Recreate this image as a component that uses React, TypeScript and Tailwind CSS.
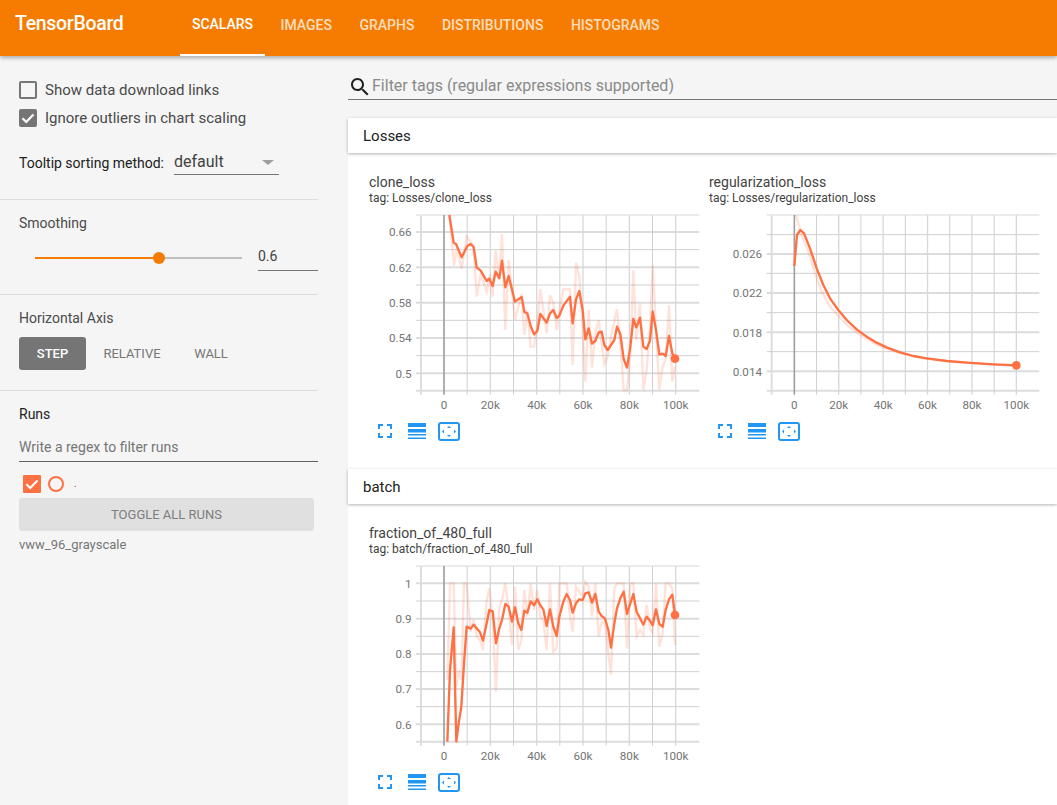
const lossLine =
  '268,135 281,218 288,222 305,262 322,228 332,222 341,232 350,292 362,302 380,333 388,326 398,348 407,305 418,325 426,272 436,352 446,318 465,395 485,381 493,426 502,430 512,468 522,493 532,483 541,432 560,458 570,430 580,420 590,444 598,437 610,407 630,380 638,460 648,388 658,363 668,420 676,508 686,475 696,521 706,513 716,487 725,485 733,525 743,540 763,510 771,470 781,492 791,567 801,593 811,530 820,447 829,472 840,443 850,530 860,537 870,512 878,424 888,480 898,553 908,551 917,558 927,498 937,550 945,566';
const lossRaw =
  '268,135 278,240 282,287 290,235 305,297 320,200 340,225 350,380 362,310 380,365 390,315 398,380 407,242 418,320 426,192 436,480 446,270 465,450 485,372 493,495 502,420 512,530 522,530 532,460 541,357 560,490 570,375 580,400 590,480 598,420 610,358 630,357 638,585 648,278 658,320 668,480 676,635 686,420 696,592 706,490 716,450 733,582 743,560 755,490 771,418 781,520 791,660 801,660 811,560 820,300 829,510 840,400 850,660 860,600 870,470 878,285 888,480 898,660 908,590 917,570 927,405 937,635 945,590';
const regLine =
  '283,288 291,195 301,180 312,190 330,235 350,295 370,345 390,385 415,420 440,450 470,478 500,500 530,518 560,532 600,547 640,558 680,565 740,573 800,578 880,583 949,586';
const regRaw =
  '288,135 295,160 305,195 325,245 345,310 365,365 390,410 415,437 440,465 470,487 500,507 530,523 560,537 600,549 640,559 680,566 740,573 800,578 880,583 949,586';
const fracLine =
  '262,665 270,450 281,322 289,665 296,610 304,560 312,430 320,320 332,326 341,314 350,325 360,337 369,362 380,310 388,270 398,274 408,370 418,325 426,300 436,252 446,260 456,305 465,262 475,310 484,330 493,272 502,278 512,244 522,256 532,238 541,256 550,268 560,318 570,268 580,320 590,348 598,290 610,245 620,222 630,240 638,278 648,250 658,238 668,240 676,220 686,217 696,248 706,222 716,275 725,288 735,296 745,330 753,383 763,310 771,265 781,235 791,215 801,282 811,250 820,222 830,275 840,295 850,314 860,290 870,302 878,316 888,268 898,312 908,320 917,270 927,238 937,224 945,285';
const fracRaw =
  '262,480 270,190 281,190 289,500 296,450 304,480 312,190 320,190 332,335 341,300 350,350 360,360 369,390 380,240 388,205 398,300 408,515 418,260 426,240 436,190 446,270 456,375 465,200 475,390 484,360 493,210 502,290 512,190 522,270 532,210 541,290 550,300 560,390 570,190 580,395 590,385 598,190 620,190 630,290 638,335 648,200 658,215 668,230 676,185 686,200 696,290 706,190 716,350 725,305 735,310 745,400 753,465 763,205 771,190 791,190 801,385 811,190 820,190 830,350 840,330 850,345 860,255 870,325 878,340 888,190 898,380 908,340 917,190 927,190 937,205 945,375';

type ChartProps = {
  title: string;
  tag: string;
  top: number;
  bottom: number;
  left: number;
  x0: number;
  x100: number;
  labelX: number;
  major: [number, string][];
  minor: number[];
  line: string;
  raw: string;
};

const Chart = ({ title, tag, top, bottom, left, x0, x100, labelX, major, minor, line, raw }: ChartProps) => {
  const step = (x100 - x0) / 10;
  const pts = line.split(' ');
  const [endX, endY] = pts[pts.length - 1].split(',');
  return (
    <div className="w-[340px]">
      <div className="text-sm leading-4 text-[#424242]">{title}</div>
      <div className="text-xs leading-[14px] mt-px text-[#424242]">tag: {tag}</div>
      <svg width="340" height="200" viewBox={`27 ${top - 6} 1020 600`} className="mt-2 block">
        <line x1={left} x2={left} y1={top} y2={bottom + 12} stroke="#ddd" strokeWidth="6" />
        <line x1={left - 15} x2="1018" y1={top} y2={top} stroke="#e4e4e4" strokeWidth="5" />
        {minor.map((y) => (
          <line key={y} x1={left - 15} x2="1018" y1={y} y2={y} stroke="#d0d0d0" strokeWidth="3" />
        ))}
        {major.map(([y]) => (
          <line key={y} x1={left - 15} x2="1018" y1={y} y2={y} stroke="#dcdcdc" strokeWidth="6" />
        ))}
        <line x1={left - 15} x2="1018" y1={bottom} y2={bottom} stroke="#ddd" strokeWidth="6" />
        {[1, 2, 3, 4, 5, 6, 7, 8, 9, 10].map((i) => (
          <line
            key={i}
            x1={x0 + i * step}
            x2={x0 + i * step}
            y1={top}
            y2={bottom + 12}
            stroke={i % 2 ? '#d0d0d0' : '#d8d8d8'}
            strokeWidth={i % 2 ? 3 : 4}
          />
        ))}
        <line x1={x0} x2={x0} y1={top} y2={bottom + 12} stroke="#a0a0a0" strokeWidth="5" />
        <polyline points={raw} fill="none" stroke="#ff7043" strokeOpacity="0.2" strokeWidth="7" />
        <polyline points={line} fill="none" stroke="#ff7043" strokeWidth="7" strokeLinejoin="round" />
        <circle cx={endX} cy={endY} r="13" fill="#ff7043" />
        {major.map(([y, label]) => (
          <text key={label} x={labelX} y={y + 13} textAnchor="end" fontSize="35" fill="#757575">
            {label}
          </text>
        ))}
        {['0', '20k', '40k', '60k', '80k', '100k'].map((label, i) => (
          <text key={label} x={x0 + i * 2 * step} y={bottom + 55} textAnchor="middle" fontSize="35" fill="#757575">
            {label}
          </text>
        ))}
      </svg>
      <div className="flex items-center h-5 mt-2">
        <svg width="14" height="14" viewBox="0 0 14 14" className="ml-[9px]" fill="none" stroke="#2196f3" strokeWidth="2">
          <path d="M1 5V1h4M9 1h4v4M13 9v4H9M5 13H1V9" />
        </svg>
        <svg width="18" height="16" viewBox="0 0 18 16" className="ml-4" fill="#2196f3">
          <rect width="18" height="4" y="0" />
          <rect width="18" height="3.5" y="6" />
          <rect width="18" height="1.5" y="11" />
          <rect width="18" height="1.5" y="14.5" />
        </svg>
        <svg width="22" height="19" viewBox="0 0 22 19" className="ml-3" fill="#2196f3">
          <rect x="1" y="1" width="20" height="17" rx="2" fill="none" stroke="#2196f3" strokeWidth="2" />
          <path d="M11 4l2 2H9zM11 15l2-2H9zM4 9.500l2-2v4zM18 9.500l-2-2v4z" />
        </svg>
      </div>
    </div>
  );
};

const Check = () => (
  <svg width="18" height="18" viewBox="0 0 18 18" fill="none" stroke="#fff" strokeWidth="2.2">
    <path d="M3.500 9.300l3.700 3.700 7.300-7.500" />
  </svg>
);

const Divider = () => <div className="h-px bg-[#ddd]" />;

const CardHeader = ({ children }: { children: string }) => (
  <div className="relative h-[35px] flex items-center pl-[15px] pt-0.5 bg-white text-[15px] text-[#212121] shadow-[0_1px_3px_rgba(0,0,0,0.3)]">
    {children}
  </div>
);

const Header = () => {
  const tabs = ['Images', 'Graphs', 'Distributions', 'Histograms'];
  return (
    <header className="relative z-10 h-14 shrink-0 bg-[#f57c00] flex items-stretch text-white shadow-[0_2px_4px_rgba(0,0,0,0.3)]">
      <div className="w-[180px] pl-[15px] pb-2 flex items-center text-[19.5px] font-medium tracking-[-0.3px]">TensorBoard</div>
      <nav className="flex gap-[3.5px] text-sm font-medium uppercase">
        <div className="w-[85px] pb-1.5 flex items-center justify-center border-b-2 border-white">Scalars</div>
        {tabs.map((t) => (
          <div key={t} className="px-3 pb-1.5 flex items-center text-white/75">
            {t}
          </div>
        ))}
      </nav>
    </header>
  );
};

const Sidebar = () => (
  <aside className="w-[348px] shrink-0 pr-[30px] text-sm text-[#4a4a4a]">
    <div className="pt-[25px] pb-6 pl-[19px]">
      <div className="flex items-center gap-2 h-[18px]">
        <div className="w-[18px] h-[18px] rounded-[2px] border-2 border-[#757575]" />
        <span className="text-[15px] pt-0.5">Show data download links</span>
      </div>
      <div className="flex items-center gap-2 h-[18px] mt-[10px]">
        <div className="w-[18px] h-[18px] rounded-[2px] bg-[#757575]">
          <Check />
        </div>
        <span className="text-[15px] pt-0.5">Ignore outliers in chart scaling</span>
      </div>
      <div className="flex items-end mt-[21px] h-[27px]">
        <span className="w-[155px] pb-0.5 text-[#212121]">Tooltip sorting method:</span>
        <div className="w-[105px] h-full flex items-center justify-between pr-[5px] pt-0.5 border-b border-[#757575] text-base text-[#424242]">
          default
          <span className="w-0 h-0 border-x-[6px] border-x-transparent border-t-[5px] border-t-[#9e9e9e]" />
        </div>
      </div>
    </div>
    <Divider />
    <div className="pt-[13px] pb-[23px] pl-[19px]">
      <div className="leading-5">Smoothing</div>
      <div className="flex items-center mt-[10px] h-7">
        <div className="relative top-px ml-4 w-[207px] h-0.5 bg-[#bdbdbd]">
          <div className="h-full w-[124px] bg-[#f57c00]" />
          <div className="absolute left-[118px] -top-[5px] w-3 h-3 rounded-full bg-[#f57c00]" />
        </div>
        <div className="ml-4 w-[60px] h-7 border-b border-[#757575] text-sm leading-[26px] text-[#424242]">0.6</div>
      </div>
    </div>
    <Divider />
    <div className="pt-[13px] pb-5 pl-[19px]">
      <div className="leading-5">Horizontal Axis</div>
      <div className="flex mt-[9px] h-[33px] text-[13px] items-center uppercase">
        <div className="w-[67px] h-full pt-0.5 rounded-[3px] bg-[#757575] text-white font-medium flex items-center justify-center">Step</div>
        <div className="ml-[17px] w-[58px] pt-0.5 text-center text-[#757575]">Relative</div>
        <div className="ml-6 w-[52px] pt-0.5 text-center text-[#757575]">Wall</div>
      </div>
    </div>
    <Divider />
    <div className="pt-[13px] pl-[19px]">
      <div className="leading-5 text-[#212121]">Runs</div>
      <div className="mt-[9px] h-[29px] leading-[28px] border-b border-[#616161] text-[#757575]">Write a regex to filter runs</div>
      <div className="flex items-center mt-[13px] ml-1 h-[18px]">
        <div className="w-[18px] h-[18px] rounded-[1px] bg-[#ff7043]">
          <Check />
        </div>
        <div className="ml-[7px] w-[16px] h-[16px] rounded-full border-2 border-[#ff7043]" />
        <span className="ml-[10px] text-[10px] text-[#b71c1c]">.</span>
      </div>
      <div className="mt-[5px] w-[295px] h-[33px] pt-0.5 rounded-[3px] bg-[#e0e0e0] flex items-center justify-center text-[13px] uppercase text-[#7d7d7d]">
        Toggle all runs
      </div>
      <div className="mt-1.5 text-[13px] leading-4 text-[#757575]">vww_96_grayscale</div>
    </div>
  </aside>
);

export default function App() {
  return (
    <div className="w-full h-[805px] overflow-hidden flex flex-col bg-[#f5f5f5] font-[Roboto,sans-serif]">
      <Header />
      <div className="flex flex-1 min-h-0">
        <Sidebar />
        <main className="flex-1 min-w-0">
          <div className="mt-[18px] h-[26px] flex items-center border-b border-[#757575] text-base text-[#8a8a8a]">
            <svg width="24" height="24" viewBox="0 0 24 24" fill="#212121" className="shrink-0">
              <path d="M15.500 14h-.79l-.28-.27C15.410 12.590 16 11.110 16 9.500 16 5.910 13.090 3 9.500 3S3 5.910 3 9.500 5.910 16 9.500 16c1.610 0 3.090-.59 4.230-1.570l.27.28v.79l5 4.990L20.490 19l-4.990-5zm-6 0C7.010 14 5 11.990 5 9.500S7.010 5 9.500 5 14 7.010 14 9.500 11.990 14 9.500 14z" />
            </svg>
            <span className="-mt-0.5">Filter tags (regular expressions supported)</span>
          </div>
          <div className="mt-[18px] bg-white">
            <CardHeader>Losses</CardHeader>
            <div className="flex pl-[21px] pt-[21px] pb-7">
              <Chart
                title="clone_loss"
                tag="Losses/clone_loss"
                top={135}
                bottom={662}
                left={183}
                x0={252}
                x100={947}
                labelX={155}
                major={[[186, '0.66'], [292, '0.62'], [398, '0.58'], [504, '0.54'], [610, '0.5']]}
                minor={[239, 345, 451, 557]}
                line={lossLine}
                raw={lossRaw}
              />
              <Chart
                title="regularization_loss"
                tag="Losses/regularization_loss"
                top={135}
                bottom={662}
                left={215}
                x0={283}
                x100={949}
                labelX={186}
                major={[[252, '0.026'], [369, '0.022'], [487, '0.018'], [604, '0.014']]}
                minor={[194, 310, 428, 545]}
                line={regLine}
                raw={regRaw}
              />
            </div>
            <CardHeader>batch</CardHeader>
            <div className="flex pl-[21px] pt-[21px] pb-7">
              <Chart
                title="fraction_of_480_full"
                tag="batch/fraction_of_480_full"
                top={138}
                bottom={665}
                left={183}
                x0={252}
                x100={947}
                labelX={155}
                major={[[190, '1'], [296, '0.9'], [402, '0.8'], [507, '0.7'], [613, '0.6']]}
                minor={[243, 349, 455, 560]}
                line={fracLine}
                raw={fracRaw}
              />
            </div>
          </div>
        </main>
      </div>
    </div>
  );
}
